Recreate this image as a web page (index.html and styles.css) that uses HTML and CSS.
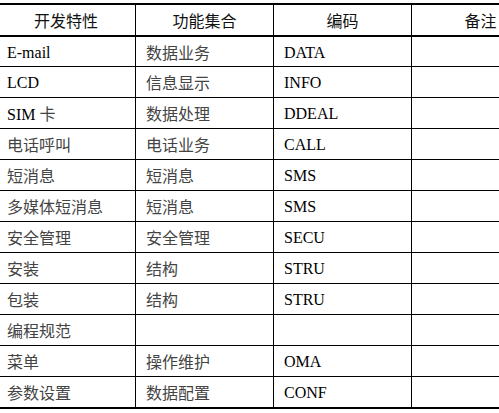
FILE: index.html
```html
<!DOCTYPE html>
<html lang="zh-CN">
<head>
<meta charset="utf-8">
<title>开发特性</title>
<link rel="stylesheet" href="styles.css">
</head>
<body>
<table class="spec">
  <colgroup><col><col><col><col></colgroup>
  <thead>
    <tr><th>开发特性</th><th>功能集合</th><th>编码</th><th>备注</th></tr>
  </thead>
  <tbody>
    <tr><td><span class="en">E-mail</span></td><td><span class="zh">数据业务</span></td><td><span class="en">DATA</span></td><td></td></tr>
    <tr><td><span class="en">LCD</span></td><td><span class="zh">信息显示</span></td><td><span class="en">INFO</span></td><td></td></tr>
    <tr><td><span class="en">SIM</span> <span class="zh">卡</span></td><td><span class="zh">数据处理</span></td><td><span class="en">DDEAL</span></td><td></td></tr>
    <tr><td><span class="zh">电话呼叫</span></td><td><span class="zh">电话业务</span></td><td><span class="en">CALL</span></td><td></td></tr>
    <tr><td><span class="zh">短消息</span></td><td><span class="zh">短消息</span></td><td><span class="en">SMS</span></td><td></td></tr>
    <tr><td><span class="zh">多媒体短消息</span></td><td><span class="zh">短消息</span></td><td><span class="en">SMS</span></td><td></td></tr>
    <tr><td><span class="zh">安全管理</span></td><td><span class="zh">安全管理</span></td><td><span class="en">SECU</span></td><td></td></tr>
    <tr><td><span class="zh">安装</span></td><td><span class="zh">结构</span></td><td><span class="en">STRU</span></td><td></td></tr>
    <tr><td><span class="zh">包装</span></td><td><span class="zh">结构</span></td><td><span class="en">STRU</span></td><td></td></tr>
    <tr><td><span class="zh">编程规范</span></td><td></td><td></td><td></td></tr>
    <tr><td><span class="zh">菜单</span></td><td><span class="zh">操作维护</span></td><td><span class="en">OMA</span></td><td></td></tr>
    <tr><td><span class="zh">参数设置</span></td><td><span class="zh">数据配置</span></td><td><span class="en">CONF</span></td><td></td></tr>
  </tbody>
</table>
</body>
</html>
```

FILE: styles.css
```css
html, body {
  margin: 0;
  padding: 0;
  background: #fff;
  overflow: hidden;
}

.spec {
  margin: 3px 0 0 -3px;
  width: 552px;
  table-layout: fixed;
  border-collapse: separate;
  border-spacing: 0;
  font-family: "Liberation Serif", serif;
  font-size: 16px;
  color: #000;
}

.spec col {
  width: 138px;
}

.spec th,
.spec td {
  box-sizing: border-box;
  padding: 0 0 0 10px;
  vertical-align: middle;
  text-align: left;
  white-space: nowrap;
  line-height: 18px;
  border-bottom: 1px solid #000;
}

.spec th + th,
.spec td + td {
  border-left: 1px solid #000;
}

.spec th {
  height: 34px;
  padding: 0;
  text-align: center;
  font-family: "Noto Sans CJK SC", sans-serif;
  font-weight: 400;
  font-size: 16px;
  color: #111;
  border-top: 2px solid #000;
  border-bottom: 2px solid #000;
}

.spec td {
  height: 31px;
  padding-top: 2px;
}

.spec tbody tr:first-child td {
  height: 30px;
}

.spec tbody tr:last-child td {
  height: 32px;
  border-bottom: 2px solid #000;
}

.en {
  font-family: "Liberation Serif", "Times New Roman", serif;
  font-size: 16px;
  color: #000;
}

.zh {
  font-family: "Noto Sans CJK SC", sans-serif;
  font-size: 16px;
  color: #444;
}
```
